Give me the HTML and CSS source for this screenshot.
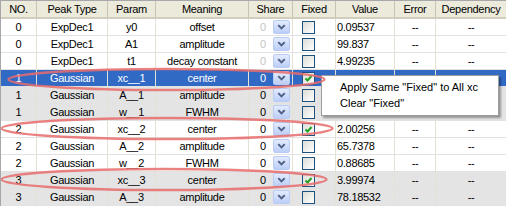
FILE: index.html
```html
<!DOCTYPE html>
<html lang="en">
<head>
  <meta charset="UTF-8" />
  <title>Peak Parameters</title>
  <link rel="stylesheet" href="styles.css">
</head>
<body>

  <div class="grid">
    <table class="params">
      <colgroup>
        <col style="width:36px"><col style="width:71px"><col style="width:48px">
        <col style="width:93px"><col style="width:44px"><col style="width:43px">
        <col style="width:59px"><col style="width:41px"><col style="width:71px">
      </colgroup>
      <thead>
        <tr>
          <th>NO.</th><th>Peak Type</th><th>Param</th><th>Meaning</th><th>Share</th>
          <th>Fixed</th><th>Value</th><th>Error</th><th>Dependency</th>
        </tr>
      </thead>
      <tbody>
        <tr>
          <td>0</td><td>ExpDec1</td><td>y0</td><td>offset</td>
          <td><div class="share off"><span>0</span><span class="combo"><svg viewBox="0 0 16 13"><path d="M4.5 4.5 L8 8 L11.5 4.5"/></svg></span></div></td>
          <td><div class="fixed"><span class="box"></span></div></td>
          <td class="value">0.09537</td><td>--</td><td>--</td>
        </tr>
        <tr>
          <td>0</td><td>ExpDec1</td><td>A1</td><td>amplitude</td>
          <td><div class="share off"><span>0</span><span class="combo"><svg viewBox="0 0 16 13"><path d="M4.5 4.5 L8 8 L11.5 4.5"/></svg></span></div></td>
          <td><div class="fixed"><span class="box"></span></div></td>
          <td class="value"> 99.837</td><td>--</td><td>--</td>
        </tr>
        <tr>
          <td>0</td><td>ExpDec1</td><td>t1</td><td>decay constant</td>
          <td><div class="share off"><span>0</span><span class="combo"><svg viewBox="0 0 16 13"><path d="M4.5 4.5 L8 8 L11.5 4.5"/></svg></span></div></td>
          <td><div class="fixed"><span class="box"></span></div></td>
          <td class="value">4.99235</td><td>--</td><td>--</td>
        </tr>
        <tr class="selected">
          <td>1</td><td>Gaussian</td><td>xc__1</td><td>center</td>
          <td><div class="share"><span>0</span><span class="combo"><svg viewBox="0 0 16 13"><path d="M4.5 4.5 L8 8 L11.5 4.5"/></svg></span></div></td>
          <td><div class="fixed"><span class="box"><svg viewBox="0 0 11 11"><path d="M2.5 5.5 L4.5 7.5 L8.5 3"/></svg></span></div></td>
          <td class="value"></td><td></td><td></td>
        </tr>
        <tr class="alt">
          <td>1</td><td>Gaussian</td><td>A__1</td><td>amplitude</td>
          <td><div class="share"><span>0</span><span class="combo"><svg viewBox="0 0 16 13"><path d="M4.5 4.5 L8 8 L11.5 4.5"/></svg></span></div></td>
          <td><div class="fixed"><span class="box"></span></div></td>
          <td class="value"></td><td></td><td></td>
        </tr>
        <tr class="alt">
          <td>1</td><td>Gaussian</td><td>w__1</td><td>FWHM</td>
          <td><div class="share"><span>0</span><span class="combo"><svg viewBox="0 0 16 13"><path d="M4.5 4.5 L8 8 L11.5 4.5"/></svg></span></div></td>
          <td><div class="fixed"><span class="box"></span></div></td>
          <td class="value">0.88102</td><td>--</td><td>--</td>
        </tr>
        <tr>
          <td>2</td><td>Gaussian</td><td>xc__2</td><td>center</td>
          <td><div class="share"><span>0</span><span class="combo"><svg viewBox="0 0 16 13"><path d="M4.5 4.5 L8 8 L11.5 4.5"/></svg></span></div></td>
          <td><div class="fixed"><span class="box"><svg viewBox="0 0 11 11"><path d="M2.5 5.5 L4.5 7.5 L8.5 3"/></svg></span></div></td>
          <td class="value">2.00256</td><td>--</td><td>--</td>
        </tr>
        <tr>
          <td>2</td><td>Gaussian</td><td>A__2</td><td>amplitude</td>
          <td><div class="share"><span>0</span><span class="combo"><svg viewBox="0 0 16 13"><path d="M4.5 4.5 L8 8 L11.5 4.5"/></svg></span></div></td>
          <td><div class="fixed"><span class="box"></span></div></td>
          <td class="value">65.7378</td><td>--</td><td>--</td>
        </tr>
        <tr>
          <td>2</td><td>Gaussian</td><td>w__2</td><td>FWHM</td>
          <td><div class="share"><span>0</span><span class="combo"><svg viewBox="0 0 16 13"><path d="M4.5 4.5 L8 8 L11.5 4.5"/></svg></span></div></td>
          <td><div class="fixed"><span class="box"></span></div></td>
          <td class="value">0.88685</td><td>--</td><td>--</td>
        </tr>
        <tr class="alt">
          <td>3</td><td>Gaussian</td><td>xc__3</td><td>center</td>
          <td><div class="share"><span>0</span><span class="combo"><svg viewBox="0 0 16 13"><path d="M4.5 4.5 L8 8 L11.5 4.5"/></svg></span></div></td>
          <td><div class="fixed"><span class="box"><svg viewBox="0 0 11 11"><path d="M2.5 5.5 L4.5 7.5 L8.5 3"/></svg></span></div></td>
          <td class="value">3.99974</td><td>--</td><td>--</td>
        </tr>
        <tr class="alt">
          <td>3</td><td>Gaussian</td><td>A__3</td><td>amplitude</td>
          <td><div class="share"><span>0</span><span class="combo"><svg viewBox="0 0 16 13"><path d="M4.5 4.5 L8 8 L11.5 4.5"/></svg></span></div></td>
          <td><div class="fixed"><span class="box"></span></div></td>
          <td class="value">78.18532</td><td>--</td><td>--</td>
        </tr>
      </tbody>
    </table>

    <!-- context menu over the value column -->
    <div class="menu">
      <div class="menu-item">Apply Same "Fixed" to All xc</div>
      <div class="menu-item">Clear "Fixed"</div>
    </div>

    <!-- red highlight rings around the fixed xc rows -->
    <svg class="marks" width="506" height="206" viewBox="0 0 506 206">
      <ellipse cx="166.5" cy="79.5" rx="158" ry="10.5"/>
      <ellipse cx="167" cy="128.5" rx="165.5" ry="10.5"/>
      <ellipse cx="164" cy="179.5" rx="162.5" ry="10.5"/>
    </svg>
  </div>

</body>
</html>
```

FILE: styles.css
```css
* {
  box-sizing: border-box;
}

body {
  margin: 0;
  font-family: 'Liberation Sans', Arial, sans-serif;
  font-size: 11px;
  background-color: #fff;
}

.grid {
  position: relative;
  width: 506px;
  height: 206px;
  overflow: hidden;
  border-top: 1px solid #a7a6aa;
  border-left: 1px solid #a7a6aa;
}

.params {
  table-layout: fixed;
  width: 505px;
  border-collapse: separate;
  border-spacing: 0;
  letter-spacing: -0.3px;
}

.params th {
  height: 18px;
  padding: 0;
  font-weight: normal;
  color: #000;
  background-color: #ebeadb;
  border-right: 1px solid #c7c5b2;
  border-bottom: 2px solid #d2cebd;
  white-space: nowrap;
  overflow: hidden;
}

.params td {
  height: 17px;
  padding: 0;
  text-align: center;
  white-space: nowrap;
  overflow: hidden;
  border-right: 1px solid #e4e2d6;
  border-bottom: 1px solid #e2e2e2;
}

.params td.value {
  text-align: left;
  padding-left: 1px;
}

.params tr.alt td {
  background-color: #e4e4e4;
}

.params tr.selected td {
  background-color: #316ac5;
  color: #fff;
}

.share {
  display: flex;
  align-items: center;
  justify-content: space-between;
  padding: 0 2px 0 11px;
}

.share.off span:first-child {
  color: #c4c4c4;
}

.combo {
  display: block;
  width: 17px;
  height: 14px;
  border: 1px solid #b7cbf5;
  border-radius: 2px;
  background: linear-gradient(#e3ebfe, #bccef8);
}

.combo svg {
  display: block;
  width: 15px;
  height: 12px;
  fill: none;
  stroke: #4d6185;
  stroke-width: 2.2;
}

.fixed {
  display: flex;
  align-items: center;
  padding-left: 9px;
}

.box {
  display: block;
  width: 13px;
  height: 13px;
  border: 1px solid #1c5180;
  background: linear-gradient(135deg, #dcdcd7, #fff);
}

.box svg {
  display: block;
  width: 11px;
  height: 11px;
  fill: none;
  stroke: #21a121;
  stroke-width: 2;
}

.menu {
  position: absolute;
  left: 320px;
  top: 74px;
  width: 178px;
  height: 41px;
  padding-top: 3px;
  background-color: #fff;
  border: 1px solid #9d9d9d;
  box-shadow: 2px 2px 2px rgba(0,0,0,0.35);
}

.menu-item {
  height: 16px;
  line-height: 16px;
  padding-left: 18px;
  color: #000;
}

.marks {
  position: absolute;
  top: -1px;
  left: -1px;
  pointer-events: none;
}

.marks ellipse {
  fill: none;
  stroke: #e86c6c;
  stroke-opacity: 0.85;
  stroke-width: 2.5;
}
```
